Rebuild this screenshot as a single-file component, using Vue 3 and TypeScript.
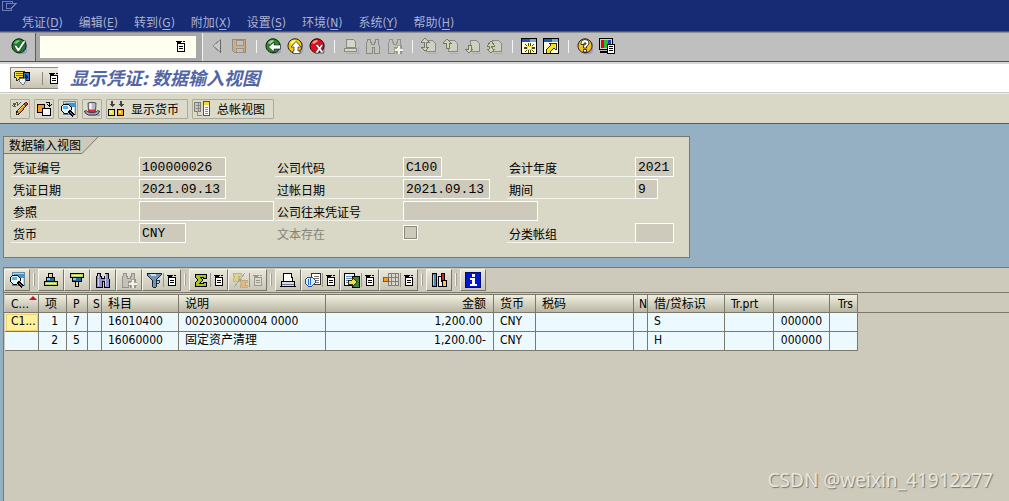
<script setup lang="ts">
import { h } from 'vue'

type Shape = [d: string, fill: string, stroke?: string, width?: number]

const K = '#000'
const G = '#8a8a84'
const ball = 'M8 .8a7 7 0 1 0 .01 0z'
const shade = 'M10 2.500a7 7 0 1 1-4 12.500z'
const page = 'M5.500 2.500h6l3 3v8h-9z'
const bino = 'M2 1h3v3h1v2h3V4h1V1h3v3l1 3v8h-5V9H7v6H1V7l1-3z'
const sigma = 'M2 2h11v4h-3V5H7l3 3-3 3h3v-1h3v4H2v-3l3-3-3-3z'
const listBody = 'M4.500 5.500h7v8h-7z'
const listCap = 'M3 3h6v1H8v1H7v1H5V5H4V4H3zM10 3h2v1h-2z'

const smooth = ['ok', 'back', 'up', 'cancel', 'help', 'hat']

const icons: Record<string, Shape[]> = {
  system: [['M1.500 10.500V1.500H11.500V3M1.500 10.500H10.500V8M5.500 3.500H15L10 8.500H5.500z', 'none', '#6f7db4']],
  ok: [[shade, '#9c9ac4'], [ball, '#1d7a2b', '#06200a'], ['M3 5a6 6 0 0 1 5-3l1 1-4 3z', '#7cc47a'], ['M3 7.500L5 7l2.500 3L12 3h3l-7 10.500H6.500z', '#fff', '#111', 0.5]],
  back: [[shade, '#9c9ac4'], [ball, '#2b8a2e', '#06200a'], ['M3 5a6 6 0 0 1 5-3l1 1-4 3z', '#a5d792'], ['M3.500 9L9 4v3h6.500v4H9v3z', '#fff', '#111', 0.6]],
  up: [[shade, '#9c9ac4'], [ball, '#f3cb00', '#241c00'], ['M3 5a6 6 0 0 1 5-3l1 1-4 3z', '#fffbb0'], ['M9 3.500L14 9h-3v4h2v2.500H6V13h1V9H4z', '#fff', '#111', 0.6]],
  cancel: [[shade, '#9c9ac4'], [ball, '#e00d1c', '#2c0003'], ['M3 5a6 6 0 0 1 5-3l1 1-4 3z', '#ff9d96'], ['M6 6.500h3L10.500 9 12 6.500h2.500L12 10.500l3 4.500h-3l-1.500-2.500L9 15H6l3-4.500z', '#fff', '#111', 0.5]],
  prev: [['M11 2v12L4 8z', '#c9c9c9', '#8c8c8c'], ['M11 2h1v13h-1z', '#666']],
  save: [['M1.500 1.500h13v13h-11l-2-2z', '#c4b69b', '#8a8a86'], ['M5 2h7v5H5zM5 10h7v4H5z', '#c0c0c0', '#96938c'], ['M3 2h1v11H3zM13 2h1v12h-1z', '#d2a36c']],
  print: [['M3.500 1.500h8l1 8h-9z', '#fff', K], ['M2 9h12l1 5H1z', '#dcdccf', K], ['M3 9h10', 'none', K], ['M2 12h12', 'none', '#6475ad']],
  printOff: [['M3.500 1.500h7l2 2v6h-9z', '#d5d4c9', G], ['M1.500 10.500h12v3h-12z', '#d8d6c8', G], ['M3 15h12V9', 'none', '#aaa9c8']],
  find: [[bino, '#8f93c9', K], ['M3 2h1v4H3zM10 2h1v4h-1zM3 7h1v7H3zM10 7h1v7h-1z', '#cfd2ec']],
  findOff: [[bino, '#c4c3b9', G]],
  findMoreOff: [[bino, '#c4c3b9', '#93928b'], ['M10 7h3v3h3v3h-3v3h-3v-3H7v-3h3z', '#f2f1e8', '#93928b', 0.8]],
  pageFirst: [[page, '#d0cfc3', G], ['M7 15h9V6', 'none', '#abaac9'], ['M4 0l4 4H5v5h3l-4 4-4-4h3V4H0z', '#d9d8a5', '#77766c']],
  pagePrev: [[page, '#d0cfc3', G], ['M7 15h9V6', 'none', '#abaac9'], ['M4 1l4 4H6v5H3V5H0z', '#d9d8a5', '#77766c']],
  pageNext: [[page, '#d0cfc3', G], ['M7 15h9V6', 'none', '#abaac9'], ['M4 15l4-4H6V7H3v4H0z', '#d9d8a5', '#77766c']],
  pageLast: [[page, '#d0cfc3', G], ['M7 15h9V6', 'none', '#abaac9'], ['M4 15l4-4H6L4 9l4-1-4-5-4 5 3 1-1 2H0z', '#d9d8a5', '#77766c']],
  session: [['M.5.5h15v15H.500z', '#fffde0', K], ['M1 1h14v3H1z', '#1c5dae'], ['M9 1h6v3H9z', '#79a9dc'], ['M7 5h1v3h1V5h1v10H9v-4H8v4H7zM3 9h3v2H3zM11 9h3v2h-3zM4 6h1v1h1v1H5V7H4zM12 6h1v1h-1v1h-1V7h1zM4 13h1v-1h1v1H5v1H4zM12 13h1v1h-1zM11 12h1v1h-1z', '#4f4600'], ['M6 8h5v4H6z', '#f4e01c'], ['M7 9h3v2H7z', '#fff']],
  shortcut: [['M.5.5h15v15H.500z', '#fffde0', K], ['M1 1h14v3H1z', '#1c5dae'], ['M9 1h6v3H9z', '#79a9dc'], ['M6 5h7v7l-2-2-4 4v1H3v-3l5-5z', '#f4e01c', K, 0.8]],
  help: [[shade, '#9c9ac4'], [ball, '#f5bd21', '#241c00'], ['M3 5a6 6 0 0 1 5-3l1 1-4 3z', '#fff2a5'], ['M4 6.500V5a4 3.500 0 0 1 8 0q0 2-2.500 3.500V10h-3V7.500L9 6V5H7v1.500zM6.500 11.500h3V14h-3z', '#fff', '#111', 0.8]],
  layout: [['M.5.5h13v11H.500z', '#d0d0d0', K], ['M2 2h4v8H2z', '#e00'], ['M5 2h4v8H5z', '#18c431'], ['M9 2h3v8H9z', '#2040c0'], ['M1 14h9', 'none', K, 2], ['M8.500 6.500h7v9h-7z', '#fff', K], ['M10 8h4v1h-4zM10 10h4v1h-4zM10 12h4v1h-4z', K]],
  list: [[listBody, '#fff', K], [listCap, K], ['M6 8h4v1H6zM6 10h4v1H6z', K]],
  listOff: [[listBody, '#ddd9c9', '#9a988e'], [listCap, '#9a988e'], ['M6 8h4v1H6zM6 10h4v1H6z', '#9a988e']],
  services: [['M.5 1.500h10v6H5l-2 3-1-3H.500z', '#f6e02c', K, 0.8], ['M2 3h7M2 5h7', 'none', '#776900'], ['M9.500 2.500h6v8h-6z', '#2370ca', K], ['M11 4l4 3-4 3z', '#061e45'], ['M6 8h5l1 3-3 4-4-4z', '#e7eef3', '#55606a', 0.8]],
  edit: [['M4 14l1-4 8-8 2 2-8 9z', '#f08d18', K, 0.8], ['M4 14l1-4 2 3z', '#fff1bd', K, 0.7], ['M6 10l7-7', 'none', '#ffdf77'], ['M12 3l2-2 2 2-2 2z', '#d33', K, 0.6], ['M0 5l2-3v3l3-4v4l4-4M1 6l3-1', 'none', '#4a4a43', 0.9]],
  other: [['M1.500 3.500h7v8h-7z', '#fa9722', K], ['M6.500 7.500h8v7h-8z', '#edf4ff', K], ['M7 8h5v4H7z', '#fff'], ['M9.500 1.500h4v3M11.500 3.500l2 2 2-2', 'none', K]],
  detail: [['M3.500.5h12v13h-12z', '#b7d7ed', '#68889c'], ['M5 2h10v4H5z', '#3b97d8'], ['M12 6h2v6h-2z', '#fff'], ['M4 3h4l3 3v3l-3 3H4L1 9V6z', '#e4f4fa', K], ['M3 5h5v3H3z', '#57b6e6'], ['M9 10l5 5', 'none', K, 3], ['M10 11l4 4', 'none', '#8d8dab', 1]],
  hat: [['M3 13h13v2H5z', '#a9a8c4'], ['M4 2q4-1.500 8 0l-.5 8h-7z', '#babbd2', '#333', 0.8], ['M5.500 2.500h2v6h-2z', '#fff'], ['M4 8q4 1.500 8 0v3q-4 1.500-8 0z', '#dd2834'], ['M.5 10q2-1 3.500 1 4 1.500 8 0 1.500-2 3.500-1 0 3-4 4H4.500q-4-1-4-4z', '#a3a4c0', '#22232f', 0.8]],
  currency: [['M3 0h2v3h2L4 6 1 3h2zM12 0h2v3h2l-3 3-3-3h2z', '#45453e'], ['M.5 8.500h6v6h-6z', '#f8e340', K], ['M9.500 8.500h6v6h-6z', '#f5a523', K], ['M2 10h2v2H2zM11 10h2v2h-2z', '#fff5b0']],
  ledger: [['M.5 1.500h6v9h-6z', '#c7c5b9', '#7e7d76'], ['M2 4h4M2 7h4M4 2v8M3 10v4h5', 'none', '#8e8d85'], ['M9.500.5h6v14h-6z', '#fff', '#55544d'], ['M10 1h5v3h-5z', '#f3d62f'], ['M11 6h3M11 8h3M11 10h3M11 12h3', 'none', '#888']],
  sortUp: [['M5.500 1.500h4v4h-4z', '#f6df6a', K], ['M3.500 5.500h8v4h-8z', '#2166ad', K], ['M4 6h3v2H4z', '#9cc4e6'], ['M1.500 9.500h13v4h-13z', '#b6ce58', K], ['M3 11h10v1H3z', '#edf3b9']],
  sortDown: [['M1.500 1.500h13v4h-13z', '#b6ce58', K], ['M3 3h10v1H3z', '#edf3b9'], ['M3.500 5.500h9v4h-9z', '#2166ad', K], ['M4 6h3v2H4z', '#9cc4e6'], ['M6.500 9.500h3v5h-3z', '#f6df6a', K]],
  filter: [['M1 1h14v2l-5 5v7H7l-1-7-5-5z', '#7095bd', K, 0.8], ['M3 2h7v2H5z', '#c7dcf0'], ['M10 8h3v3h-3z', '#a4bed5', K, 0.7]],
  sum: [[sigma, '#a8c520', K]],
  subtotal: [['M1 1h8v3H6l2 2-2 1h3v2H1V7l2-2-2-1z', '#ded38d', '#aaa06f', 0.6], ['M8 8h8v2h-3l1 1-1 2h3v2H8v-2l2-1-2-2z', '#e4b77f', '#aaa06f', 0.6], ['M13 1L2 15', 'none', '#aaa79a']],
  view: [['M6.500 1.500h9v11h-9z', '#fff', '#333'], ['M9 4h5M9 6h5M9 8h5M9 10h5', 'none', '#777'], ['M3 5h4l3 3v3l-3 3H3l-3-3V8z', '#dcedf8', '#173b83', 0.9], ['M3 7v6M5 6v7', 'none', '#226cd1', 1]],
  exportFile: [['M.5 1.500h10v12H.500z', '#f0f5ff', K], ['M2 4h6M2 6h6M2 8h5M2 10h5', 'none', '#6c90c0'], ['M8.500 4.500h7v11h-7z', '#39833a', K], ['M4 8h4V5l5 5-5 5v-3H4z', '#f6df3a', K, 0.8]],
  columns: [['M5.500 1.500h10v12h-10zM5 5.500h10M5 9.500h10M8.500 2v11M12.500 2v11', '#d7d6cb', '#817f76'], ['M0 5.500h5v4H0z', '#f59b21', '#664719', 0.8]],
  chart: [['M1.500 1.500h4v13h-4z', '#5484b3', K], ['M7.500 4.500h4v10h-4z', '#eee', K], ['M10.500 1.500h3v8h-3z', '#cf2632', K], ['M11.500 8.500h4v6h-4z', '#f2cf32', K], ['M2 3h1v10H2z', '#b1d4ed']],
  info: [['M.5.5h15v15H.500z', '#0016d1', '#000a70'], ['M7 2h3v3H7zM5 6h5v6h2v2H5v-2h2V8H5z', '#fff']]
}

const Glyph = (props: { name: string }) =>
  h('svg', {
    width: 16, height: 16, viewBox: '0 0 16 16', 'aria-hidden': 'true',
    'shape-rendering': smooth.includes(props.name) ? 'auto' : 'crispEdges'
  }, icons[props.name].map(([d, fill, stroke, width]) =>
    h('path', { d, fill, stroke: stroke ?? 'none', 'stroke-width': width ?? 1 })))
Glyph.props = ['name']

const menus = [['凭证', 'D'], ['编辑', 'E'], ['转到', 'G'], ['附加', 'X'], ['设置', 'S'], ['环境', 'N'], ['系统', 'Y'], ['帮助', 'H']]

const standard: [string, string][][] = [
  [['prev', '命令栏'], ['save', '保存']],
  [['back', '返回'], ['up', '退出'], ['cancel', '取消']],
  [['printOff', '打印'], ['findOff', '查找'], ['findMoreOff', '继续查找']],
  [['pageFirst', '首页'], ['pagePrev', '上一页'], ['pageNext', '下一页'], ['pageLast', '末页']],
  [['session', '新会话'], ['shortcut', '快捷方式']],
  [['help', '帮助'], ['layout', '布局']]
]

const actions: { icon: string; label: string; text?: string }[] = [
  { icon: 'edit', label: '更改' }, { icon: 'other', label: '其他凭证' }, { icon: 'detail', label: '明细' },
  { icon: 'hat', label: '抬头' }, { icon: 'currency', label: '显示货币', text: '显示货币' },
  { icon: 'ledger', label: '总帐视图', text: '总帐视图' }
]

const gridTools: { icon: string; label: string; menu?: boolean; off?: boolean }[][] = [
  [{ icon: 'detail', label: '明细' }],
  [{ icon: 'sortUp', label: '升序' }, { icon: 'sortDown', label: '降序' }, { icon: 'find', label: '查找' },
    { icon: 'findMoreOff', label: '继续查找', off: true }, { icon: 'filter', label: '过滤', menu: true }],
  [{ icon: 'sum', label: '总计', menu: true }, { icon: 'subtotal', label: '小计', menu: true, off: true }],
  [{ icon: 'print', label: '打印' }, { icon: 'view', label: '视图', menu: true },
    { icon: 'exportFile', label: '导出', menu: true }, { icon: 'columns', label: '格式', menu: true }],
  [{ icon: 'chart', label: '图形' }],
  [{ icon: 'info', label: '信息' }]
]

const fields: { id: string; label: string; value: string; col: number; row: number; size: string }[] = [
  { id: 'doc', label: '凭证编号', value: '100000026', col: 1, row: 1, size: 'w10' },
  { id: 'docdate', label: '凭证日期', value: '2021.09.13', col: 1, row: 2, size: 'w10' },
  { id: 'ref', label: '参照', value: '', col: 1, row: 3, size: 'w16' },
  { id: 'cur', label: '货币', value: 'CNY', col: 1, row: 4, size: 'w5' },
  { id: 'company', label: '公司代码', value: 'C100', col: 3, row: 1, size: 'w4' },
  { id: 'posting', label: '过帐日期', value: '2021.09.13', col: 3, row: 2, size: 'w10' },
  { id: 'cross', label: '公司往来凭证号', value: '', col: 3, row: 3, size: 'w16' },
  { id: 'year', label: '会计年度', value: '2021', col: 5, row: 1, size: 'w4' },
  { id: 'period', label: '期间', value: '9', col: 5, row: 2, size: 'w2' },
  { id: 'group', label: '分类帐组', value: '', col: 5, row: 4, size: 'w4' }
]

const widths = [34, 28, 21, 14, 77, 147, 168, 42, 98, 14, 77, 49, 56, 28]
const heads = ['C...', '项', 'P', 'S', '科目', '说明', '金额', '货币', '税码', 'N', '借/贷标识', 'Tr.prt', '', 'Trs']
const rows = [
  ['C1...', '1', '7', '', '16010400', '002030000004 0000', '1,200.00 ', 'CNY', '', '', 'S', '', '000000', ''],
  ['', '2', '5', '', '16060000', '固定资产清理', '1,200.00-', 'CNY', '', '', 'H', '', '000000', '']
]
</script>

<template>
  <div class="window">
    <header class="menubar">
      <button class="sys" aria-label="系统菜单"><Glyph name="system" /></button>
      <nav class="menus">
        <button v-for="m in menus" :key="m[1]">{{ m[0] }}(<u>{{ m[1] }}</u>)</button>
      </nav>
    </header>

    <div class="standard">
      <button class="enter" aria-label="回车"><Glyph name="ok" /></button>
      <div class="command">
        <input type="text" aria-label="命令">
        <button aria-label="命令历史"><Glyph name="list" /></button>
      </div>
      <div class="groups">
        <div v-for="(g, i) in standard" :key="i" class="group">
          <button v-for="b in g" :key="b[0]" :aria-label="b[1]"><Glyph :name="b[0]" /></button>
        </div>
      </div>
    </div>

    <div class="titlebar">
      <button class="services" aria-label="对象服务"><Glyph name="services" /><i></i><Glyph name="list" /></button>
      <h1>显示凭证: 数据输入视图</h1>
    </div>

    <div class="actions">
      <button v-for="a in actions" :key="a.icon" :aria-label="a.label"><Glyph :name="a.icon" /><span v-if="a.text">{{ a.text }}</span></button>
    </div>

    <main>
      <section class="panel">
        <h2><span>数据输入视图</span><svg width="17" height="17" viewBox="0 0 17 17" aria-hidden="true"><path d="M0 0H16L0 16z" fill="#cdcabb" /><path d="M0 16.500L16 0" fill="none" stroke="#7b796c" /></svg></h2>
        <form class="form" @submit.prevent>
          <template v-for="f in fields" :key="f.id">
            <label :for="f.id" :class="['c' + f.col, 'r' + f.row]">{{ f.label }}</label>
            <input :id="f.id" type="text" readonly :value="f.value" :class="['v' + f.col, 'r' + f.row, f.size]">
          </template>
          <label for="textflag" class="c3 r4 dim">文本存在</label>
          <input id="textflag" type="checkbox" disabled class="v3 r4">
        </form>
      </section>

      <section class="grid">
        <div class="tools">
          <div v-for="(g, i) in gridTools" :key="i" class="toolset">
            <button v-for="t in g" :key="t.icon" :aria-label="t.label" :disabled="t.off" :class="{ split: t.menu }">
              <Glyph :name="t.icon" /><template v-if="t.menu"><i></i><Glyph :name="t.off ? 'listOff' : 'list'" /></template>
            </button>
          </div>
        </div>
        <div class="tablewrap">
          <table>
            <colgroup><col v-for="(w, i) in widths" :key="i" :style="{ width: w + 'px' }"></colgroup>
            <thead>
              <tr><th v-for="(t, i) in heads" :key="i" :class="'k' + i">{{ t }}</th></tr>
            </thead>
            <tbody>
              <tr v-for="(r, n) in rows" :key="n">
                <td v-for="(c, i) in r" :key="i" :class="['k' + i, { picked: n === 0 && i === 0 }]">{{ c }}</td>
              </tr>
            </tbody>
          </table>
        </div>
        <p class="mark">CSDN @weixin_41912277</p>
      </section>
    </main>
  </div>
</template>

<style>
html, body, #app { height: 100%; margin: 0; }
body { overflow: hidden; }
</style>

<style scoped>
* { box-sizing: border-box; }
.window {
  display: flex; flex-direction: column; min-height: 100vh; background: #95b0c3; color: #000;
  font: 12px/16px "DejaVu Sans Condensed", "Noto Sans CJK SC", sans-serif;
}
button { margin: 0; padding: 0; border: 0; background: none; font: inherit; color: inherit; display: flex; align-items: center; }
button svg { display: block; flex: none; }
h1, h2, p { margin: 0; font-weight: normal; }
label, h2, .actions { font-family: "Noto Sans CJK SC", sans-serif; }

.menubar { background: #172a74; height: 32px; border-bottom: 1px solid #4d5878; }
.sys { height: 15px; padding-left: 1px; align-items: flex-start; }
.menus { display: flex; gap: 16px; padding-left: 22px; color: #a9b2d2; }
.menus u { text-underline-offset: 2px; }

.standard { display: flex; height: 30px; background: #bfbfbf; border-top: 1px solid #8f8f8f; border-bottom: 1px solid #505050; }
.enter { width: 36px; padding: 0 0 2px 11px; border-right: 1px solid #5c5c5c; }
.command { display: flex; position: relative; width: 167px; padding: 3px 6px 3px 4px; background: #a8a8a8; border-right: 1px solid #f4f4f4; }
.command input { width: 100%; border: 0; padding: 0 24px 0 4px; background: #fffff0; font: inherit; outline: 0; }
.command button { position: absolute; right: 13px; top: 5px; }
.groups { display: flex; align-items: center; padding: 0 0 2px 6px; }
.group { display: flex; gap: 6px; }
.group + .group { margin-left: 9px; padding-left: 9px; position: relative; }
.group + .group::before { content: ""; position: absolute; left: 0; top: 2px; height: 13px; border-left: 1px solid #f4f4f4; }

.titlebar { display: flex; align-items: center; gap: 12px; height: 31px; background: #fff; border-top: 2px solid #d6d6d6; border-bottom: 1px solid #c9c9c9; padding-left: 10px; }
.services { width: 48px; height: 22px; padding-left: 3px; overflow: hidden; background: linear-gradient(#f0eee2, #c6c3b3); border: solid #8b897d; border-width: 1px 0 1px 1px; }
.services i { height: 13px; margin: 0 3px 0 12px; border-left: 1px solid #8b897d; }
h1 { padding-bottom: 2px; font: italic bold 18px/26px "Noto Sans CJK SC", sans-serif; color: #5266a5; white-space: nowrap; }

.actions { display: flex; align-items: center; gap: 4px; height: 31px; padding: 0 10px; background: #d9d7c5; border-top: 1px solid #f2f1e8; border-bottom: 1px solid #5b5a50; }
.actions button { height: 20px; padding: 0 1px; border: 1px solid #aeab9b; background: #dcdac9; border-radius: 1px; }
.actions button > span { padding: 0 7px; }

main { flex: 1; display: flex; flex-direction: column; padding: 12px 0 0 3px; }
.panel { width: 687px; max-width: 100%; height: 122px; background: #d9d7c5; border: 1px solid #7b796c; }
h2 { display: flex; height: 17px; font-size: 12px; line-height: 16px; }
h2 span { padding: 0 1px 0 5px; background: #cdcabb; border-bottom: 1px solid #7b796c; white-space: nowrap; }
.form { display: grid; grid-template-columns: 128px 136px 128px 104px 128px 1fr; grid-auto-rows: 20px; row-gap: 2px; margin: 3px 0 0 7px; }
.form label { padding: 2px 0 0 2px; line-height: 17px; border-bottom: 1px solid #f4f3ea; white-space: nowrap; }
.form .dim { color: #858379; border: 0; }
.form input[type="text"] { height: 20px; margin: 0; padding: 0 2px; border: 1px solid #fff; background: #cdcabb; font: 13px/16px "Liberation Mono", monospace; color: #000; outline: 0; border-radius: 0; }
.form input[type="checkbox"] { appearance: none; width: 15px; height: 15px; margin: 2px 0 0; border: 1px solid #fff; outline: 1px solid #8c8a80; outline-offset: -2px; background: #cdcabb; }
.w10 { width: 87px; } .w16 { width: 135px; } .w5 { width: 47px; } .w4 { width: 39px; } .w2 { width: 23px; }
.c1 { grid-column: 1; } .v1 { grid-column: 2; } .c3 { grid-column: 3; } .v3 { grid-column: 4; } .c5 { grid-column: 5; } .v5 { grid-column: 6; }
.r1 { grid-row: 1; } .r2 { grid-row: 2; } .r3 { grid-row: 3; } .r4 { grid-row: 4; }

.grid { flex: 1; position: relative; margin-top: 9px; background: #cdcabb; border: solid #7b796c; border-width: 1px 0 0 1px; }
.tools { display: flex; height: 25px; padding-top: 1px; border-bottom: 1px solid #7b796c; }
.toolset { display: flex; }
.toolset + .toolset { position: relative; margin-left: 8px; }
.toolset + .toolset::before { content: ""; position: absolute; left: -5px; top: 4px; height: 13px; border-left: 1px solid #f4f3ea; border-right: 1px solid #a5a293; }
.tools button { width: 26px; height: 22px; padding: 0 0 0 4px; border: 1px solid; border-color: #f6f5ec #77756a #77756a #f6f5ec; background: linear-gradient(#e8e6d9, #c9c6b6); }
.tools .split { width: 39px; padding-left: 3px; }
.tools button i { height: 14px; border-left: 1px solid #98968a; margin-left: 1px; }

.tablewrap { overflow: hidden; background: linear-gradient(#7b796c, #7b796c) 0 19px / 100% 1px no-repeat; }
table { width: 853px; table-layout: fixed; border-collapse: separate; border-spacing: 0; margin: 1px 0 0 1px; }
th, td { height: 19px; padding: 0 4px 0 6px; border: solid #7b796c; border-width: 0 1px 1px 0; font-weight: normal; text-align: left; white-space: pre; overflow: hidden; line-height: 16px; }
th { background: linear-gradient(#f1efdf, #b9b6a5); border-top: 1px solid #7b796c; }
td { background: #ecf9ff; padding-bottom: 2px; }
.k1, .k2 { padding-left: 6px; padding-right: 6px; }
td.k1 { padding-right: 8px; text-align: right; }
.k3, .k9 { padding: 0 1px 0 5px; }
.k6, .k12, .k13 { text-align: right; padding-right: 7px; }
.k13 { padding: 0 4px 0 0; }
th.k0 { position: relative; }
th.k0::after { content: ""; position: absolute; right: 1px; top: 1px; border: 4px solid transparent; border-top: 0; border-bottom-color: #c8102e; }
.picked { background: #fff09a; outline: 1px solid #ecd272; outline-offset: -2px; }
.mark { position: absolute; right: 16px; bottom: 9px; font: 19px/24px "Noto Sans", sans-serif; color: #e7e6df; text-shadow: 1px 1px 1px #77756c; white-space: nowrap; }
</style>
